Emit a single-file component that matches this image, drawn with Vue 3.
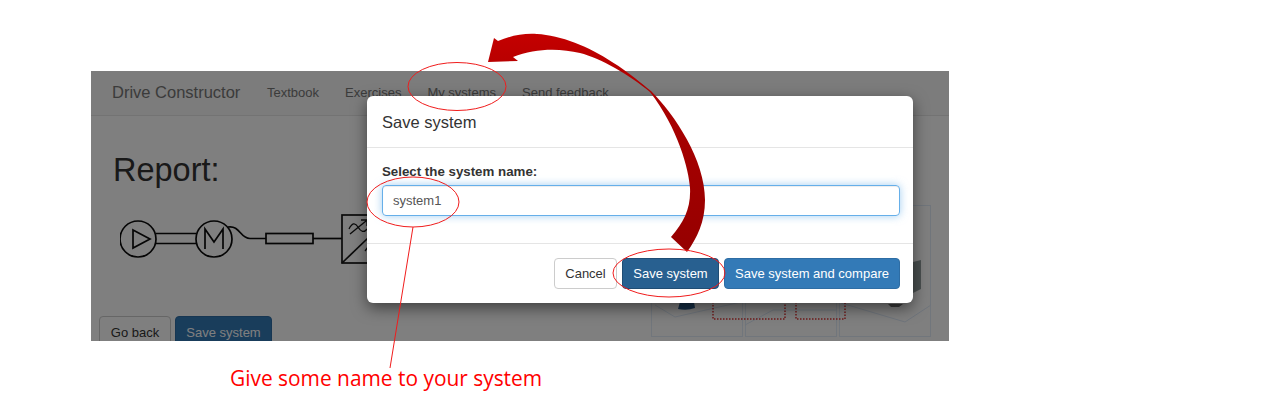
<script setup>
const links = ['Textbook', 'Exercises', 'My systems', 'Send feedback']
</script>

<template>
  <div class="page">
    <div class="shot">
      <header class="nav">
        <span class="brand">Drive Constructor</span>
        <nav class="links"><span v-for="l in links" :key="l">{{ l }}</span></nav>
      </header>
      <main class="content">
        <h1>Report:</h1>
        <svg class="schema" width="260" height="64" viewBox="0 0 260 64" fill="none" stroke="#0b0b0b" stroke-width="1.7">
          <circle cx="18" cy="23" r="18" />
          <path d="M13 14 L30 23 L13 32 Z" />
          <path d="M36 17.5 H76 M36 27.5 H76" />
          <circle cx="94" cy="23" r="18" />
          <path d="M85 33 V13 L94 26 L103 13 V33" />
          <path d="M108 11 C120 9 120 22.5 130 22.5 H146" />
          <rect x="146" y="17.5" width="47" height="10" />
          <path d="M193 22.5 H222" />
        </svg>
        <div class="actions">
          <button class="btn back">Go back</button>
          <button class="btn save">Save system</button>
        </div>
        <div class="thumbs">
          <div class="thumb"></div>
          <div class="thumb"></div>
          <div class="thumb"></div>
          <svg class="iso" width="285" height="135" viewBox="0 0 285 135" fill="none">
            <path d="M4 100 L24 112 L90 97 M94 120 L122 105 H186 M190 98 L254 117 L280 100" stroke="#dfeaf8" stroke-width="1" />
            <path d="M62 97 V114 H134 V97 M145 97 V114 H194 V97" stroke="#e03434" stroke-width="1.5" stroke-dasharray="1.5 1.5" />
            <path d="M29 97 H43 L44 103 Q36 106 27 104 Z" fill="#2e5f8e" />
            <path d="M262 57 L270 55 V84 L262 88 Z" fill="#94a0a0" />
            <path d="M237 99 H252 L248 102 H240 Z" fill="#777" />
          </svg>
        </div>
      </main>
      <div class="backdrop"></div>
      <svg class="converter" width="40" height="64" viewBox="0 0 40 64" fill="none" stroke="#0b0b0b" stroke-width="1.7">
        <rect x="0" y="0" width="48" height="48" />
        <path d="M0 48 L26 23" />
        <path d="M7 14 C10 8 13 7 16 12 C19 17 22 18 25 14 M8 19 L24 6 M19 5 H25 V11" stroke-width="1.3" />
        <path d="M23 36 L26 32" stroke-width="1.3" />
      </svg>
      <section class="modal">
        <div class="modal-head">Save system</div>
        <div class="modal-body">
          <label class="field-label">Select the system name:</label>
          <div class="input">system1</div>
        </div>
        <div class="modal-foot">
          <button class="btn cancel">Cancel</button>
          <button class="btn primary-dark">Save system</button>
          <button class="btn primary">Save system and compare</button>
        </div>
      </section>
    </div>
    <svg class="notes" width="1280" height="403" viewBox="0 0 1280 403" fill="none">
      <defs>
        <linearGradient id="arrowFill" gradientUnits="userSpaceOnUse" x1="0" y1="34" x2="0" y2="252">
          <stop offset="0" stop-color="#c40000" />
          <stop offset="0.3" stop-color="#aa0000" />
          <stop offset="1" stop-color="#960000" />
        </linearGradient>
      </defs>
      <path d="M488 62 L494 38 L498 41 C510 36 523 33 537 34 C560 35 590 47 612 62 C630 73 642 84 651 91 C675 115 705 160 705 200 C705 222 697 238 687 252 L671 237 C684 222 691 208 690 188 C689 170 678 128 650 92 C630 75 600 58 580 53 C560 48 535 48 513 57 L518 61 Z" fill="url(#arrowFill)" />
      <ellipse cx="457" cy="86.5" rx="49" ry="24" stroke="#f01c1c" />
      <ellipse cx="413" cy="202" rx="46" ry="25" stroke="#f01c1c" />
      <ellipse cx="669" cy="273" rx="56" ry="24" stroke="#f01c1c" />
      <path d="M413 227 L390 368" stroke="#f01c1c" />
    </svg>
    <p class="caption">Give some name to your system</p>
  </div>
</template>

<style>
html, body { margin: 0; background: #fff; }
</style>

<style scoped>
.page {
  position: relative;
  width: 1280px;
  height: 403px;
  overflow: hidden;
  padding: 71px 0 0 91px;
  box-sizing: border-box;
  font-family: "Liberation Sans", Arial, sans-serif;
  background: #fff;
}
.shot {
  position: relative;
  width: 858px;
  height: 270px;
  overflow: hidden;
  background: #fff;
}
.nav {
  display: flex;
  align-items: center;
  box-sizing: content-box;
  height: 42px;
  padding: 0 0 2px 21px;
  border-bottom: 1px solid #e7e7e7;
  background: #f8f8f8;
  color: #777;
}
.brand { font-size: 16.5px; width: 155px; }
.links { display: flex; gap: 26px; font-size: 13px; }
.content { position: relative; padding-left: 22px; height: 225px; }
h1 {
  margin: 0;
  padding-top: 34px;
  font-size: 32.5px;
  line-height: 40px;
  font-weight: 400;
  color: #333;
}
.schema { position: absolute; left: 29px; top: 100px; }
.actions { position: absolute; left: 8px; top: 200px; display: flex; gap: 4px; }
.btn {
  box-sizing: border-box;
  height: 31px;
  padding: 0;
  white-space: nowrap;
  border: 1px solid #ccc;
  border-radius: 4px;
  background: #fff;
  color: #333;
  font: 13px "Liberation Sans", Arial, sans-serif;
}
.back { width: 72px; height: 32px; }
.save { width: 97px; height: 32px; background: #337ab7; border-color: #2e6da4; color: #fff; }
.thumbs {
  position: absolute;
  left: 560px;
  top: 89px;
  display: grid;
  grid-template-columns: 91.5px 91.5px 91.5px;
  gap: 2.5px;
  height: 132px;
}
.thumb { border: 1px solid #e2ecf8; background: #fff; }
.iso { position: absolute; left: 0; top: 0; }
.backdrop { position: absolute; inset: 0; background: rgba(0, 0, 0, 0.5); }
.converter { position: absolute; left: 251px; top: 144px; overflow: visible; }
.modal {
  position: absolute;
  left: 276px;
  top: 25px;
  box-sizing: border-box;
  width: 546px;
  height: 207px;
  background: #fff;
  border-radius: 6px;
  box-shadow: 0 5px 15px rgba(0, 0, 0, 0.5);
}
.modal-head {
  box-sizing: border-box;
  height: 52px;
  padding: 17px 15px 0;
  border-bottom: 1px solid #e5e5e5;
  font-size: 16.5px;
  line-height: 19px;
  color: #333;
}
.modal-body { box-sizing: border-box; height: 95px; padding: 16px 13.5px 0 14.5px; }
.field-label {
  display: block;
  margin-bottom: 5px;
  padding-left: 0.5px;
  font-size: 13.3px;
  line-height: 16px;
  font-weight: 700;
  color: #333;
}
.input {
  box-sizing: border-box;
  height: 31px;
  padding: 0 10.5px;
  border: 1px solid #66afe9;
  border-radius: 4px;
  box-shadow: inset 0 1px 1px rgba(0, 0, 0, 0.075), 0 0 8px rgba(102, 175, 233, 0.6);
  font-size: 13px;
  line-height: 29px;
  color: #555;
}
.modal-foot {
  box-sizing: border-box;
  height: 60px;
  padding: 14px 13px 0;
  border-top: 1px solid #e5e5e5;
  display: flex;
  justify-content: flex-end;
  gap: 5px;
}
.cancel { width: 63px; }
.primary-dark { width: 97px; background: #286090; border-color: #204d74; color: #fff; }
.primary { width: 176px; background: #337ab7; border-color: #2e6da4; color: #fff; }
.notes { position: absolute; left: 0; top: 0; }
.caption {
  position: absolute;
  left: 230px;
  top: 365px;
  margin: 0;
  font-family: "Open Sans", sans-serif;
  font-size: 20.9px;
  line-height: 27px;
  color: #f00;
}
</style>
